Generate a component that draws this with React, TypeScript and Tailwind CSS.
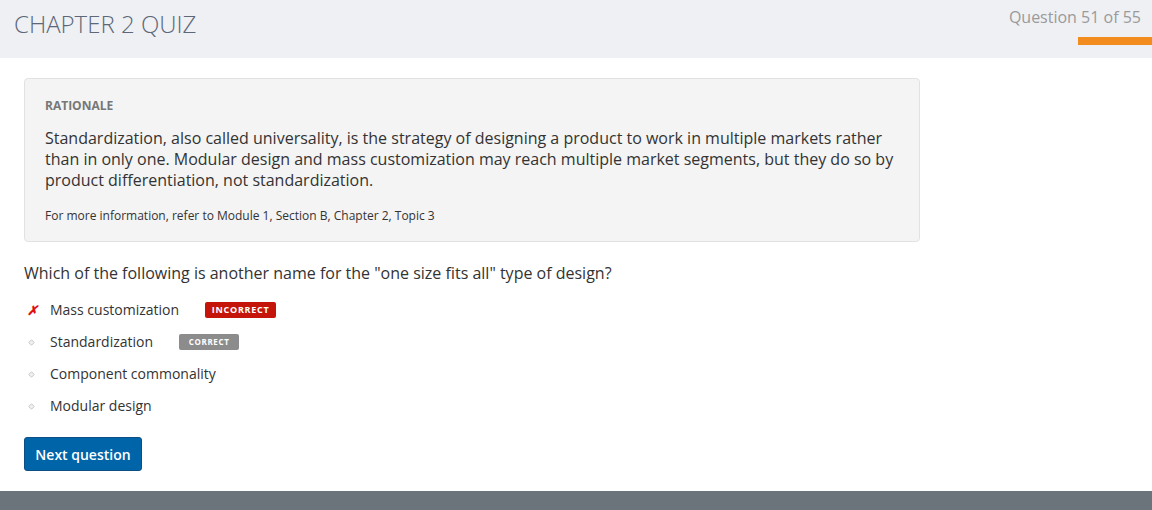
import React from "react";

const options = [
  { label: "Mass customization", status: "incorrect" as const },
  { label: "Standardization", status: "correct" as const },
  { label: "Component commonality", status: null },
  { label: "Modular design", status: null },
];

function Diamond() {
  return (
    <svg width="7" height="7" viewBox="0 0 7 7" aria-hidden="true">
      <path d="M3.5 0.8 L6.2 3.5 L3.5 6.2 L0.8 3.5 Z" fill="#f2f2f2" stroke="#c4c4c4" strokeWidth="1" />
    </svg>
  );
}

export default function App() {
  return (
    <div className="flex h-[510px] w-[1152px] flex-col bg-white font-['Open_Sans',sans-serif] text-[#333]">
      <header className="flex h-[58px] shrink-0 items-start justify-between bg-[#eff0f4]">
        <h1 className="pl-[14px] pt-[8px] text-[24px] font-light leading-[32px] text-[#5c6878]">CHAPTER 2 QUIZ</h1>
        <div className="flex flex-col items-end pt-[7px]">
          <p className="pr-[11px] text-[16px] leading-[21px] text-[#9a9a9a]">Question 51 of 55</p>
          <div className="mt-[9px] h-[8px] w-[74px] bg-[#f28c1f]" />
        </div>
      </header>

      <main className="flex flex-1 flex-col px-6 pt-5">
        <section className="w-[896px] rounded-[4px] border border-[#e2e2e2] bg-[#f4f4f4] px-5 pb-[17px] pt-[18px]">
          <h2 className="text-[12px] font-bold leading-[18px] text-[#777]">RATIONALE</h2>
          <p className="mt-[13px] text-[16px] leading-[21px] text-[#333]">
            Standardization, also called universality, is the strategy of designing a product to work in multiple markets rather
            than in only one. Modular design and mass customization may reach multiple market segments, but they do so by
            product differentiation, not standardization.
          </p>
          <p className="mt-[16px] text-[12px] leading-[17px] text-[#333]">
            For more information, refer to Module 1, Section B, Chapter 2, Topic 3
          </p>
        </section>

        <p className="mt-[20px] text-[16px] leading-[22px] text-[#333]">
          Which of the following is another name for the "one size fits all" type of design?
        </p>

        <ul className="mt-[10px] flex flex-col">
          {options.map((o) => (
            <li key={o.label} className="flex h-[32px] items-center">
              <span className="flex w-[26px] justify-start pl-[3px]">
                {o.status === "incorrect" ? (
                  <span className="text-[13px] font-bold italic leading-none text-[#e01010]">✗</span>
                ) : (
                  <span className="pl-[1px]">
                    <Diamond />
                  </span>
                )}
              </span>
              <span className="text-[14px] leading-[20px] text-[#333]">{o.label}</span>
              {o.status === "incorrect" && (
                <span className="ml-[26px] flex h-[16px] w-[71px] items-center justify-center rounded-[2px] bg-[#c5150b] text-[9px] font-bold tracking-[0.08em] text-white">
                  INCORRECT
                </span>
              )}
              {o.status === "correct" && (
                <span className="ml-[26px] flex h-[16px] w-[60px] items-center justify-center rounded-[2px] bg-[#8c8c8c] text-[8px] font-bold tracking-[0.08em] text-white">
                  CORRECT
                </span>
              )}
            </li>
          ))}
        </ul>

        <div className="mt-[15px]">
          <button className="h-[34px] w-[118px] rounded-[3px] border border-[#0c4f85] bg-[#0064a8] text-[14px] font-semibold text-white">
            Next question
          </button>
        </div>
      </main>

      <footer className="h-[19px] shrink-0 bg-[#6b737b]" />
    </div>
  );
}
